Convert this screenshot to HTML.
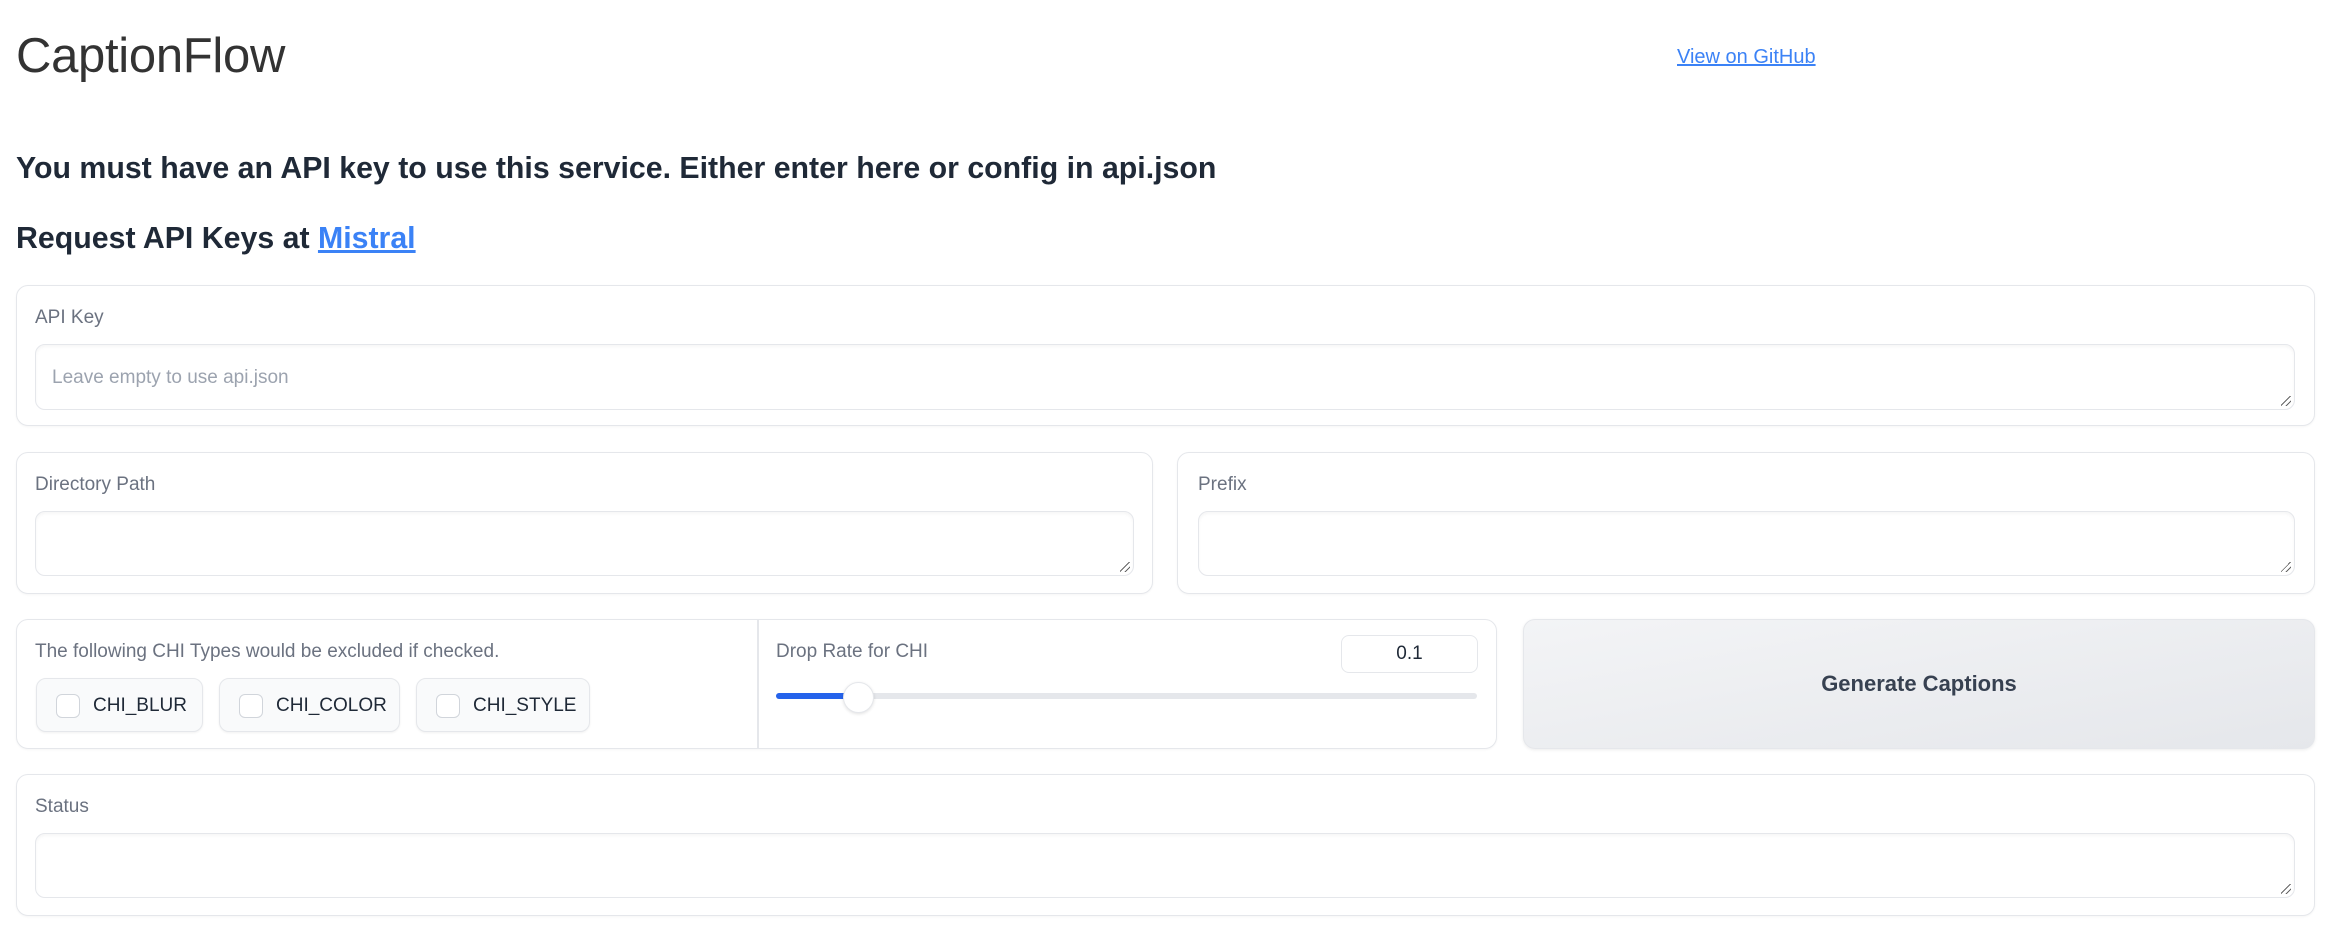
<!DOCTYPE html>
<html><head><meta charset="utf-8"><style>
*{box-sizing:border-box;margin:0;padding:0}
body{width:2337px;height:948px;background:#fff;font-family:"Liberation Sans",sans-serif;position:relative;overflow:hidden;color:#1f2937}
.a{position:absolute}
.box{position:absolute;border:1.5px solid #e5e7eb;border-radius:12px;background:#fff;box-shadow:0 1px 2px rgba(0,0,0,.04)}
.lbl{position:absolute;font-size:19px;color:#6b7280;white-space:nowrap}
.inp{position:absolute;border:1.5px solid #e5e7eb;border-radius:10px;background:#fff;box-shadow:inset 0 2px 3px rgba(0,0,0,.04)}
.grip{position:absolute;right:3px;bottom:3px;width:10px;height:10px;background:linear-gradient(135deg,transparent 45%,#666 45%,#666 52%,transparent 52%,transparent 72%,#666 72%,#666 79%,transparent 79%)}
.chip{position:absolute;top:678px;height:54px;border:1.5px solid #e5e7eb;border-radius:10px;background:#f9fafb;box-shadow:0 1px 2px rgba(0,0,0,.06);font-size:19px;color:#1f2937}
.chip i{position:absolute;left:19px;top:15px;width:24px;height:24px;border:1.5px solid #d1d5db;border-radius:6px;background:#fff}
.chip span{position:absolute;left:56px;top:16px}
</style></head><body>
<div class="a" style="left:16px;top:28px;font-size:49px;color:#333;letter-spacing:-0.3px">CaptionFlow</div>
<div class="a" style="left:1677px;top:46px;font-size:20px;color:#3b82f6;text-decoration:underline">View on GitHub</div>
<div class="a" style="left:16px;top:152px;font-size:30.3px;font-weight:bold;color:#1f2937;white-space:nowrap">You must have an API key to use this service. Either enter here or config in api.json</div>
<div class="a" style="left:16px;top:222px;font-size:30.3px;font-weight:bold;color:#1f2937;white-space:nowrap">Request API Keys at <span style="color:#3b82f6;text-decoration:underline">Mistral</span></div>

<div class="box" style="left:16px;top:285px;width:2299px;height:141px"></div>
<div class="lbl" style="left:35px;top:307px">API Key</div>
<div class="inp" style="left:35px;top:344px;width:2260px;height:66px"><div class="a" style="left:16px;top:22px;font-size:19px;color:#9ca3af">Leave empty to use api.json</div><div class="grip"></div></div>

<div class="box" style="left:16px;top:452px;width:1137px;height:142px"></div>
<div class="lbl" style="left:35px;top:474px">Directory Path</div>
<div class="inp" style="left:35px;top:511px;width:1099px;height:65px"><div class="grip"></div></div>

<div class="box" style="left:1177px;top:452px;width:1138px;height:142px"></div>
<div class="lbl" style="left:1198px;top:474px">Prefix</div>
<div class="inp" style="left:1198px;top:511px;width:1097px;height:65px"><div class="grip"></div></div>

<div class="box" style="left:16px;top:619px;width:1481px;height:130px"></div>
<div class="a" style="left:757px;top:620px;width:1.5px;height:128px;background:#e5e7eb"></div>
<div class="lbl" style="left:35px;top:641px">The following CHI Types would be excluded if checked.</div>
<div class="chip" style="left:36px;width:167px"><i></i><span>CHI_BLUR</span></div>
<div class="chip" style="left:219px;width:181px"><i></i><span>CHI_COLOR</span></div>
<div class="chip" style="left:416px;width:174px"><i></i><span>CHI_STYLE</span></div>
<div class="lbl" style="left:776px;top:641px">Drop Rate for CHI</div>
<div class="a" style="left:1341px;top:635px;width:137px;height:38px;border:1.5px solid #e5e7eb;border-radius:8px;font-size:19px;text-align:center;line-height:35px;color:#1f2937">0.1</div>
<div class="a" style="left:776px;top:693px;width:701px;height:6px;border-radius:3px;background:#e5e7eb"></div>
<div class="a" style="left:776px;top:693px;width:82px;height:6px;border-radius:3px;background:#2563eb"></div>
<div class="a" style="left:843px;top:682px;width:31px;height:31px;border-radius:50%;background:#fff;border:1.5px solid #e5e7eb;box-shadow:0 1px 3px rgba(0,0,0,.12)"></div>

<div class="a" style="left:1523px;top:619px;width:792px;height:130px;border-radius:12px;border:1.5px solid #e5e7eb;background:linear-gradient(170deg,#f3f4f6,#e5e7eb);box-shadow:0 1px 3px rgba(0,0,0,.08);text-align:center;line-height:127px;font-size:22px;font-weight:bold;color:#374151">Generate Captions</div>

<div class="box" style="left:16px;top:774px;width:2299px;height:142px"></div>
<div class="lbl" style="left:35px;top:796px">Status</div>
<div class="inp" style="left:35px;top:833px;width:2260px;height:65px"><div class="grip"></div></div>
</body></html>
